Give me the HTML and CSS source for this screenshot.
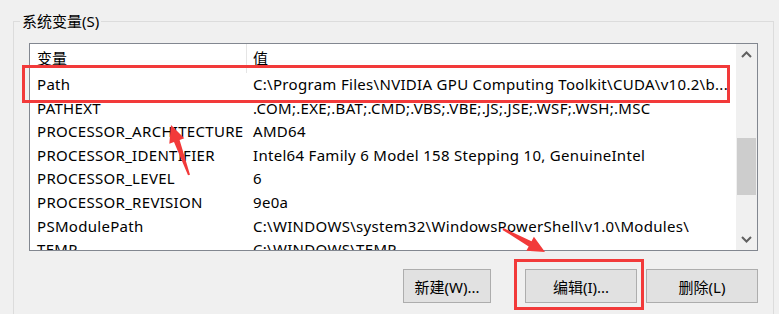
FILE: index.html
```html
<!DOCTYPE html>
<html lang="zh-CN">
<head>
<meta charset="utf-8">
<link rel="stylesheet" href="styles.css">
</head>
<body>
<div class="group">
  <div class="title">系统变量(S)</div>
  <div class="list">
    <div class="table">
      <div class="row head"><div class="c1">变量</div><div class="c2">值</div></div>
      <div class="row"><div class="c1">Path</div><div class="c2">C:\Program Files\NVIDIA GPU Computing Toolkit\CUDA\v10.2\b...</div></div>
      <div class="row"><div class="c1">PATHEXT</div><div class="c2">.COM;.EXE;.BAT;.CMD;.VBS;.VBE;.JS;.JSE;.WSF;.WSH;.MSC</div></div>
      <div class="row"><div class="c1">PROCESSOR_ARCHITECTURE</div><div class="c2">AMD64</div></div>
      <div class="row"><div class="c1">PROCESSOR_IDENTIFIER</div><div class="c2">Intel64 Family 6 Model 158 Stepping 10, GenuineIntel</div></div>
      <div class="row"><div class="c1">PROCESSOR_LEVEL</div><div class="c2">6</div></div>
      <div class="row"><div class="c1">PROCESSOR_REVISION</div><div class="c2">9e0a</div></div>
      <div class="row"><div class="c1">PSModulePath</div><div class="c2">C:\WINDOWS\system32\WindowsPowerShell\v1.0\Modules\</div></div>
      <div class="row"><div class="c1">TEMP</div><div class="c2">C:\WINDOWS\TEMP</div></div>
    </div>
    <div class="scroll">
      <div class="sbtn"><svg width="11" height="7" viewBox="0 0 11 7"><path d="M1 6 L5.5 1.5 L10 6" fill="none" stroke="#606060" stroke-width="2"/></svg></div>
      <div class="track"><div class="thumb"></div></div>
      <div class="sbtn"><svg width="11" height="7" viewBox="0 0 11 7"><path d="M1 1 L5.5 5.5 L10 1" fill="none" stroke="#606060" stroke-width="2"/></svg></div>
    </div>
  </div>
  <div class="buttons">
    <div class="btn narrow">新建(W)...</div>
    <div class="btn">编辑(I)...</div>
    <div class="btn">删除(L)</div>
  </div>
</div>
<svg class="marks" width="779" height="314" viewBox="0 0 779 314">
  <rect x="23.5" y="66.5" width="705" height="35" fill="none" stroke="#f23a3a" stroke-width="3"/>
  <rect x="515.5" y="260.5" width="127" height="48" fill="none" stroke="#f23a3a" stroke-width="3"/>
  <polygon points="171,125 184.3,138.3 179.6,140 190,174.7 188,175.3 174,142 169.3,143.7" fill="#f23a3a"/>
  <polygon points="545,252 526.3,250.8 528.7,246.4 502.5,229.9 503.5,228.1 531.5,241.2 533.9,236.8" fill="#f23a3a"/>
</svg>
</body>
</html>
```
FILE: styles.css
```css
html, body {
  margin: 0;
  padding: 0;
  background: #f0f0f0;
  width: 779px;
  height: 314px;
  overflow: hidden;
}
body {
  font-family: "Noto Sans", "Noto Sans CJK SC", sans-serif;
  font-size: 15px;
  color: #000;
}
.group {
  margin: 21px 0 0 13px;
  width: 761px;
  height: 300px;
  box-sizing: border-box;
  border: 1px solid #dcdcdc;
  border-bottom: none;
  padding: 0 0 0 15px;
}
.title {
  width: fit-content;
  margin: -11px 0 0 -9px;
  padding: 0 2px;
  height: 20px;
  line-height: 20px;
  background: #f0f0f0;
}
.list {
  margin-top: 12px;
  width: 729px;
  height: 208px;
  box-sizing: border-box;
  border: 1px solid #828790;
  background: #fff;
  display: flex;
}
.table {
  flex: 1;
  overflow: hidden;
}
.row {
  display: flex;
  height: 23.6px;
  line-height: 23.6px;
  white-space: nowrap;
  letter-spacing: 0.3px;
}
.row.head {
  height: 29px;
  line-height: 29px;
  letter-spacing: 0;
}
.c1 {
  width: 217px;
  padding-left: 7px;
  box-sizing: border-box;
  overflow: hidden;
  border-right: 1px solid transparent;
}
.head .c1 {
  border-right-color: #e5e5e5;
}
.c2 {
  padding-left: 6px;
  overflow: hidden;
}
.scroll {
  width: 21px;
  background: #f0f0f0;
  display: flex;
  flex-direction: column;
}
.sbtn {
  height: 21px;
  display: flex;
  align-items: center;
  justify-content: center;
}
.track {
  flex: 1;
  padding: 73px 1px 0 1px;
}
.thumb {
  height: 57px;
  background: #cdcdcd;
}
.buttons {
  display: flex;
  margin-top: 18px;
  padding-left: 374px;
}
.btn {
  width: 112px;
  height: 34px;
  box-sizing: border-box;
  border: 1px solid #adadad;
  background: #e1e1e1;
  display: flex;
  align-items: center;
  justify-content: center;
  margin-left: 9px;
}
.btn.narrow {
  width: 88px;
  margin-left: 0;
  margin-right: 25px;
}
.marks {
  position: absolute;
  left: 0;
  top: 0;
  pointer-events: none;
}
```
